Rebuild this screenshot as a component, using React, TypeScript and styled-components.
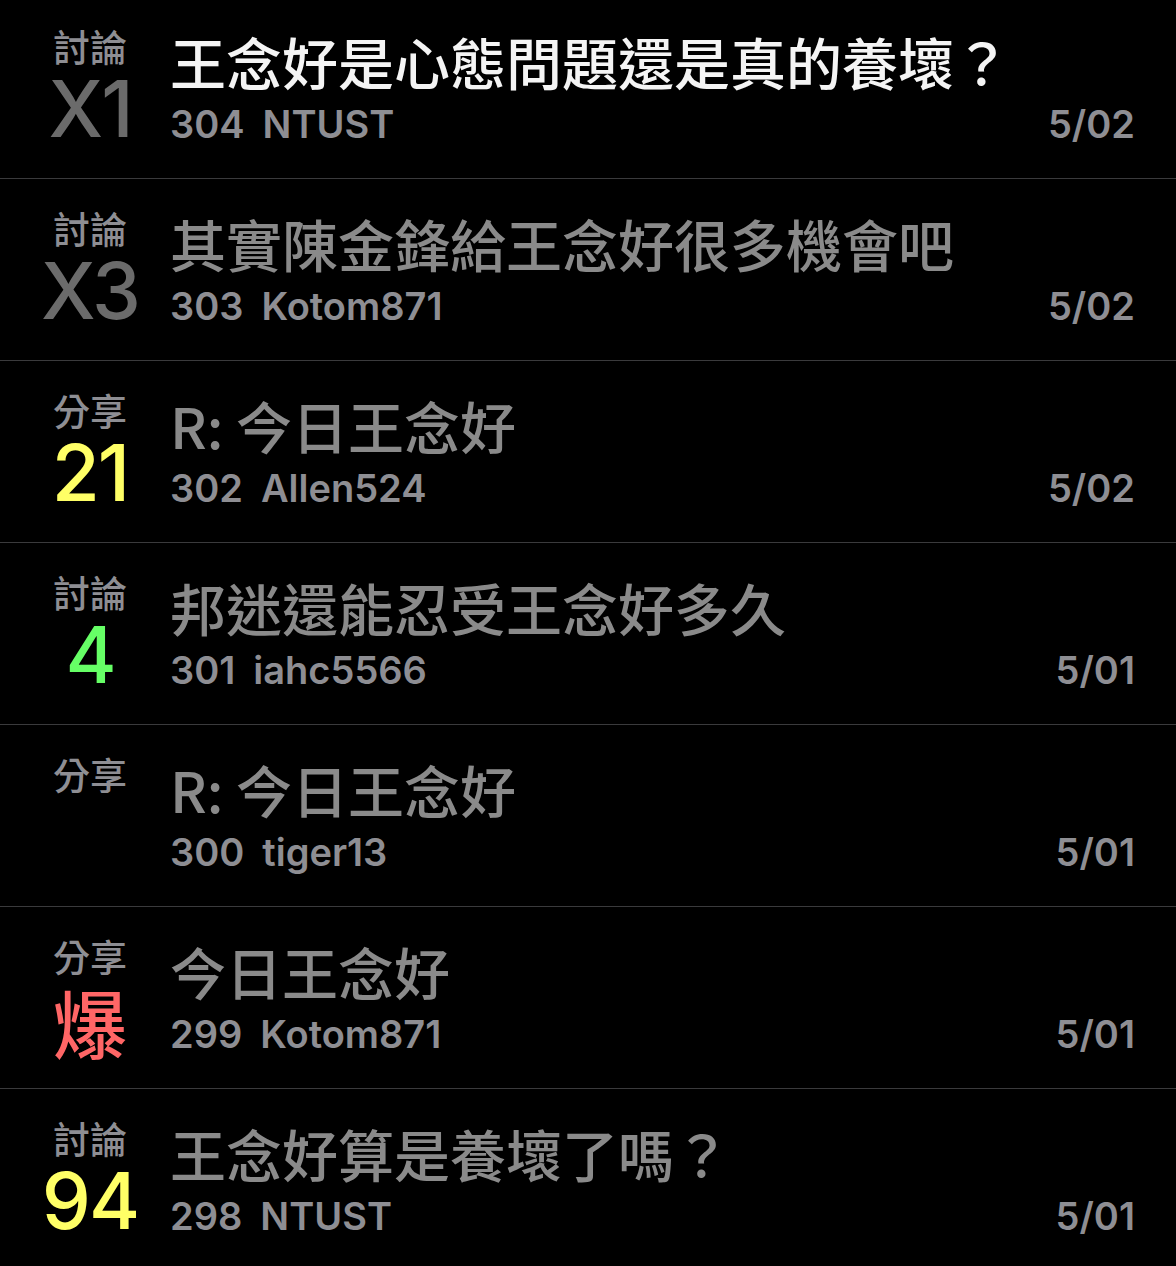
import styled, { createGlobalStyle } from "styled-components"

interface Post {
  category: string;
  badge?: string;
  badgeColor?: string;
  title: string;
  unread?: boolean;
  num: number;
  author: string;
  date: string;
}

const posts: Post[] = [
  { category: "討論", badge: "X1", badgeColor: "#6b6b6b", title: "王念好是心態問題還是真的養壞？", unread: true, num: 304, author: "NTUST", date: "5/02" },
  { category: "討論", badge: "X3", badgeColor: "#6b6b6b", title: "其實陳金鋒給王念好很多機會吧", num: 303, author: "Kotom871", date: "5/02" },
  { category: "分享", badge: "21", badgeColor: "#ffff66", title: "R: 今日王念好", num: 302, author: "Allen524", date: "5/02" },
  { category: "討論", badge: "4", badgeColor: "#66ff66", title: "邦迷還能忍受王念好多久", num: 301, author: "iahc5566", date: "5/01" },
  { category: "分享", title: "R: 今日王念好", num: 300, author: "tiger13", date: "5/01" },
  { category: "分享", badge: "爆", badgeColor: "#ff6666", title: "今日王念好", num: 299, author: "Kotom871", date: "5/01" },
  { category: "討論", badge: "94", badgeColor: "#ffff66", title: "王念好算是養壞了嗎？", num: 298, author: "NTUST", date: "5/01" },
]

const GlobalStyle = createGlobalStyle`
  html, body {
    margin: 0;
    padding: 0;
    background: #000;
  }
  body {
    font-family: "Inter", "Noto Sans CJK TC", sans-serif;
    -webkit-font-smoothing: antialiased;
  }
`

const List = styled.div`
  margin-top: -3px;
  height: 1269px;
  overflow: hidden;
  background: #000;
`

const Row = styled.div`
  display: flex;
  height: 182px;
  box-sizing: border-box;
  border-bottom: 1px solid #3a3a3c;
  padding: 28px 41px 0 0;
`

const Side = styled.div`
  width: 180px;
  flex: none;
  display: flex;
  flex-direction: column;
  align-items: center;
  margin-right: -10px;
`

const Category = styled.div`
  font-family: "Noto Sans CJK TC", sans-serif;
  font-size: 37px;
  line-height: 42px;
  color: #8e8e93;
  font-weight: 500;
`

const Badge = styled.div<{ $color: string; $cjk: boolean }>`
  font-family: ${p => (p.$cjk ? `"Noto Sans CJK TC", sans-serif` : `"Inter", "Noto Sans CJK TC", sans-serif`)};
  font-size: ${p => (p.$cjk ? "74px" : "78px")};
  line-height: 80px;
  margin-top: ${p => (p.$cjk ? "4px" : "2px")};
  letter-spacing: ${p => (p.$cjk ? "0" : "-2px")};
  color: ${p => p.$color};
  font-weight: 500;
`

const Body = styled.div`
  flex: 1;
  min-width: 0;
  display: flex;
  flex-direction: column;
`

const Title = styled.div<{ $unread?: boolean }>`
  font-family: "Noto Sans CJK TC", sans-serif;
  font-size: 56px;
  line-height: 72px;
  color: ${p => (p.$unread ? "#f4f4f4" : "#8a8a8a")};
  font-weight: 500;
  white-space: nowrap;
`

const Meta = styled.div`
  display: flex;
  justify-content: space-between;
  align-items: baseline;
  font-size: 38px;
  line-height: 54px;
  color: #8e8e93;
  font-weight: 600;
`

const Num = styled.span`
  margin-right: 18px;
`

function PostRow({ post }: { post: Post }) {
  return (
    <Row>
      <Side>
        <Category>{post.category}</Category>
        {post.badge && (
          <Badge $color={post.badgeColor || "#888"} $cjk={post.badge === "爆"}>
            {post.badge}
          </Badge>
        )}
      </Side>
      <Body>
        <Title $unread={post.unread}>{post.title}</Title>
        <Meta>
          <span>
            <Num>{post.num}</Num>
            {post.author}
          </span>
          <span>{post.date}</span>
        </Meta>
      </Body>
    </Row>
  )
}

export default function App() {
  return (
    <>
      <GlobalStyle />
      <List>
        {posts.map(p => (
          <PostRow key={p.num} post={p} />
        ))}
      </List>
    </>
  )
}
